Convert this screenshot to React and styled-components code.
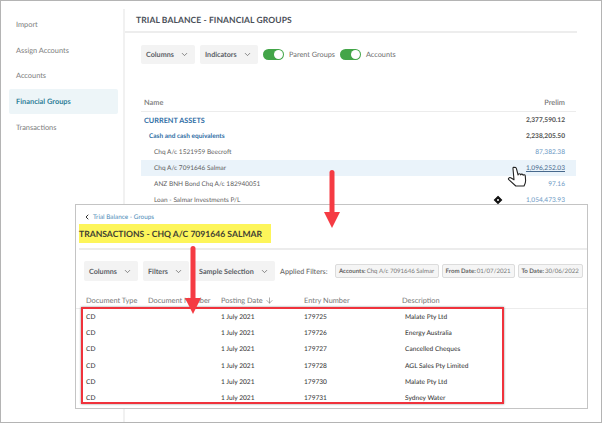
import React from 'react'
import styled, { createGlobalStyle } from 'styled-components'
import { ChevronDown, ChevronLeft, ArrowDown } from 'lucide-react'

const GlobalStyle = createGlobalStyle`
  html, body { margin: 0; padding: 0; background: #fff; }
  body { font-family: Lato, "Open Sans", sans-serif; text-rendering: geometricPrecision; }
`

const Page = styled.div`
  position: relative;
  width: 602px;
  height: 423px;
  box-sizing: border-box;
  border: 1px solid #b4b4b4;
  display: flex;
  overflow: hidden;
  background: #fff;
`

const Sidebar = styled.nav`
  width: 124px;
  flex: none;
  box-sizing: border-box;
  padding: 3px 5px 0 8px;
  margin-top: 8px;
  border-right: 2px solid #f1f1f1;
  display: flex;
  flex-direction: column;
  gap: 1px;
`

const NavItem = styled.div`
  height: 24.7px;
  display: flex;
  align-items: center;
  padding-left: 7px;
  border-radius: 2px;
  font-size: 7.4px;
  font-weight: ${p => (p.$active ? 700 : 400)};
  color: ${p => (p.$active ? '#2f7f98' : '#7c7c7c')};
  background: ${p => (p.$active ? '#edf5f8' : 'transparent')};
`

const Main = styled.main`
  width: 452px;
  flex: none;
`

const PageTitle = styled.h1`
  margin: 0;
  height: 32px;
  box-sizing: border-box;
  padding: 12px 0 0 11px;
  border-bottom: 2px solid #ededed;
  font-size: 8.5px;
  line-height: 14px;
  font-weight: 700;
  letter-spacing: 0.1px;
  color: #4a5058;
`

const Toolbar = styled.div`
  display: flex;
  align-items: center;
  gap: ${p => p.$gap || 5}px;
  padding: ${p => p.$pad};
`

const DropButton = styled.div`
  height: ${p => p.$h || 19}px;
  box-sizing: border-box;
  width: ${p => p.$w}px;
  display: flex;
  align-items: center;
  justify-content: space-between;
  padding: 0 6px 0 5px;
  border-radius: 2px;
  background: #f3f3f3;
  font-size: 7.2px;
  font-weight: 700;
  color: #5b5f66;
`

const Switch = styled.span`
  width: 21px;
  height: 11px;
  border-radius: 6px;
  background: #43a548;
  display: flex;
  justify-content: flex-end;
  align-items: center;
  padding: 1px;
  box-sizing: border-box;
  &::after {
    content: '';
    width: 9px;
    height: 9px;
    border-radius: 50%;
    background: #fff;
  }
`

const SwitchLabel = styled.span`
  font-size: 7.3px;
  color: #6c6c6c;
`

const GroupTable = styled.section`
  margin: 30px 0 0 16px;
  width: 435px;
`

const HeadRow = styled.div`
  height: 18px;
  box-sizing: border-box;
  display: flex;
  justify-content: space-between;
  align-items: center;
  padding: 0 11px 0 3px;
  border-bottom: 1px solid #ececec;
  font-size: 7.4px;
  font-weight: 600;
  color: #777;
`

const GroupRow = styled.div`
  height: 16px;
  display: flex;
  justify-content: space-between;
  align-items: center;
  padding: 0 11px 0 ${p => 3 + (p.$level || 0) * 5}px;
  font-size: ${p => (p.$level === 0 ? 7.3 : 6.5)}px;
  font-weight: ${p => (p.$heading ? 700 : 400)};
  color: ${p => (p.$heading ? '#2f6ea5' : '#5f5f5f')};
  background: ${p => (p.$hover ? '#eaf3fa' : 'transparent')};
`

const Amount = styled.span`
  font-size: 6.6px;
  font-weight: ${p => (p.$total ? 700 : 400)};
  color: ${p => (p.$total ? '#505050' : '#6b98c4')};
  ${p => p.$hover && 'color: #47698d; text-decoration: underline;'}
`

const Panel = styled.section`
  position: absolute;
  left: 74px;
  top: 203px;
  width: 513px;
  height: 205px;
  box-sizing: border-box;
  border: 1px solid #c4c4c4;
  background: #fff;
`

const Crumbs = styled.div`
  display: flex;
  align-items: center;
  height: 14px;
  margin-top: 5px;
  padding-left: 7px;
  gap: 2px;
  font-size: 6.4px;
  color: #4d8cb8;
`

const PanelTitle = styled.h2`
  margin: 0 0 0 3px;
  width: 192px;
  height: 19px;
  display: flex;
  align-items: center;
  background: #fdf55a;
  font-size: 8.6px;
  font-weight: 700;
  white-space: nowrap;
  color: #3f3f32;
`

const PanelRule = styled.div`
  height: 2px;
  margin: 5px 0 0 3px;
  background: #ececec;
`

const AppliedLabel = styled.span`
  font-size: 7.2px;
  color: #666;
  white-space: nowrap;
  margin-right: 2px;
  font-weight: 500;
`

const ChipGroup = styled.div`
  display: flex;
  gap: 3px;
`

const Chip = styled.span`
  height: 14px;
  box-sizing: border-box;
  width: ${p => p.$w}px;
  display: flex;
  align-items: center;
  justify-content: center;
  white-space: nowrap;
  border: 1px solid #dcdcdc;
  border-radius: 2px;
  background: #f5f5f5;
  font-size: 6.1px;
  color: #777;
  b { font-weight: 700; color: #666; margin-right: 1px; }
`

const TxGrid = styled.div`
  display: grid;
  grid-template-columns: 62px 73px 83px 98px 1fr;
  align-items: center;
`

const TxHead = styled(TxGrid)`
  height: 17px;
  box-sizing: border-box;
  margin-top: 11px;
  padding-left: 10px;
  border-bottom: 1px solid #ececec;
  font-size: 7.4px;
  color: #767676;
  span { display: flex; align-items: center; gap: 2px; white-space: nowrap; }
`

const RedFrame = styled.div`
  width: 423px;
  height: 97px;
  margin: -2px 0 0 5px;
  box-sizing: border-box;
  border: 2px solid #f0323c;
  padding-left: 3px;
  box-shadow: 0 0 2px rgba(0, 0, 0, 0.45);
`

const TxRow = styled(TxGrid)`
  height: 16.2px;
  font-size: 6.6px;
  font-weight: 500;
  color: #404040;
  white-space: nowrap;
`

const Desc = styled.span`
  padding-left: 3px;
`

const Overlay = styled.svg`
  position: absolute;
  left: 0;
  top: 0;
  width: 602px;
  height: 423px;
  pointer-events: none;
`

const groupRows = [
  { name: 'CURRENT ASSETS', amount: '2,377,590.12', heading: true, level: 0 },
  { name: 'Cash and cash equivalents', amount: '2,238,205.50', heading: true, level: 1 },
  { name: 'Chq A/c 1521959 Beecroft', amount: '87,382.38', level: 2 },
  { name: 'Chq A/c 7091646 Salmar', amount: '1,096,252.03', level: 2, hover: true },
  { name: 'ANZ BNH Bond Chq A/c 182940051', amount: '97.16', level: 2 },
  { name: 'Loan - Salmar Investments P/L', amount: '1,054,473.93', level: 2 },
]

const txRows = [
  ['179725', 'Malate Pty Ltd'],
  ['179726', 'Energy Australia'],
  ['179727', 'Cancelled Cheques'],
  ['179728', 'AGL Sales Pty Limited'],
  ['179730', 'Malate Pty Ltd'],
  ['179731', 'Sydney Water'],
]

const Chevron = () => <ChevronDown size={9} strokeWidth={2} color="#666" />

const RedArrow = ({ x, top, bottom }) => (
  <g fill="#f53b43">
    <rect x={x - 2.5} y={top} width={5} height={bottom - top - 10} rx={2.5} />
    <path d={`M${x - 8} ${bottom - 16}H${x + 8}L${x} ${bottom}Z`} />
  </g>
)

export default function App() {
  return (
    <>
      <GlobalStyle />
      <Page>
        <Sidebar>
          <NavItem>Import</NavItem>
          <NavItem>Assign Accounts</NavItem>
          <NavItem>Accounts</NavItem>
          <NavItem $active>Financial Groups</NavItem>
          <NavItem>Transactions</NavItem>
        </Sidebar>
        <Main>
          <PageTitle>TRIAL BALANCE - FINANCIAL GROUPS</PageTitle>
          <Toolbar $pad="12px 0 0 16px">
            <DropButton $w={54}>Columns <Chevron /></DropButton>
            <DropButton $w={58}>Indicators <Chevron /></DropButton>
            <Switch />
            <SwitchLabel>Parent Groups</SwitchLabel>
            <Switch />
            <SwitchLabel>Accounts</SwitchLabel>
          </Toolbar>
          <GroupTable>
            <HeadRow><span>Name</span><span>Prelim</span></HeadRow>
            {groupRows.map(r => (
              <GroupRow key={r.name} $heading={r.heading} $level={r.level} $hover={r.hover}>
                <span>{r.name}</span>
                <Amount $total={r.heading} $hover={r.hover}>{r.amount}</Amount>
              </GroupRow>
            ))}
          </GroupTable>
        </Main>
        <Panel>
          <Crumbs><ChevronLeft size={8} strokeWidth={3} color="#333" /> Trial Balance - Groups</Crumbs>
          <PanelTitle>TRANSACTIONS - CHQ A/C 7091646 SALMAR</PanelTitle>
          <PanelRule />
          <Toolbar $pad="11px 0 0 8px" $gap={5}>
            <DropButton $w={54} $h={20}>Columns <Chevron /></DropButton>
            <DropButton $w={46} $h={20}>Filters <Chevron /></DropButton>
            <DropButton $w={81} $h={20}>Sample Selection <Chevron /></DropButton>
            <AppliedLabel>Applied Filters:</AppliedLabel>
            <ChipGroup>
              <Chip $w={104}><b>Accounts:</b> Chq A/c 7091646 Salmar</Chip>
              <Chip $w={73}><b>From Date:</b> 01/07/2021</Chip>
              <Chip $w={65}><b>To Date:</b> 30/06/2022</Chip>
            </ChipGroup>
          </Toolbar>
          <TxHead>
            <span>Document Type</span>
            <span>Document Number</span>
            <span>Posting Date <ArrowDown size={9} strokeWidth={1.6} /></span>
            <span>Entry Number</span>
            <span>Description</span>
          </TxHead>
          <RedFrame>
            {txRows.map(([entry, desc]) => (
              <TxRow key={entry}>
                <span>CD</span>
                <span />
                <span>1 July 2021</span>
                <span>{entry}</span>
                <Desc>{desc}</Desc>
              </TxRow>
            ))}
          </RedFrame>
        </Panel>
        <Overlay viewBox="0 0 602 423">
          <RedArrow x={331} top={169} bottom={227} />
          <RedArrow x={192} top={245} bottom={313} />
          <path d="M497 195.5l3.5 3.5-3.5 3.5-3.5-3.5z" fill="#111" stroke="#111" strokeWidth="1.2" />
          <circle cx="497" cy="199" r="1" fill="#fff" />
          <path
            d="M513 166.5c1.2-.5 2.2.2 2.5 1.3l1.6 6.2c.2-1.6 2.3-1.6 2.6 0 .2-1.2 2.2-1.2 2.5.3.4-.9 2-.6 2.1.8l.3 4.4c.1 2.5-.9 4-1.6 5.5h-8.2l-7-6.3c-1-1.1.5-2.7 1.9-1.9l3.3 2-1-11c-.1-.9.1-1.4.5-1.6z"
            fill="#fff"
            stroke="#222"
            strokeWidth="1.1"
            strokeLinejoin="round"
          />
        </Overlay>
      </Page>
    </>
  )
}
